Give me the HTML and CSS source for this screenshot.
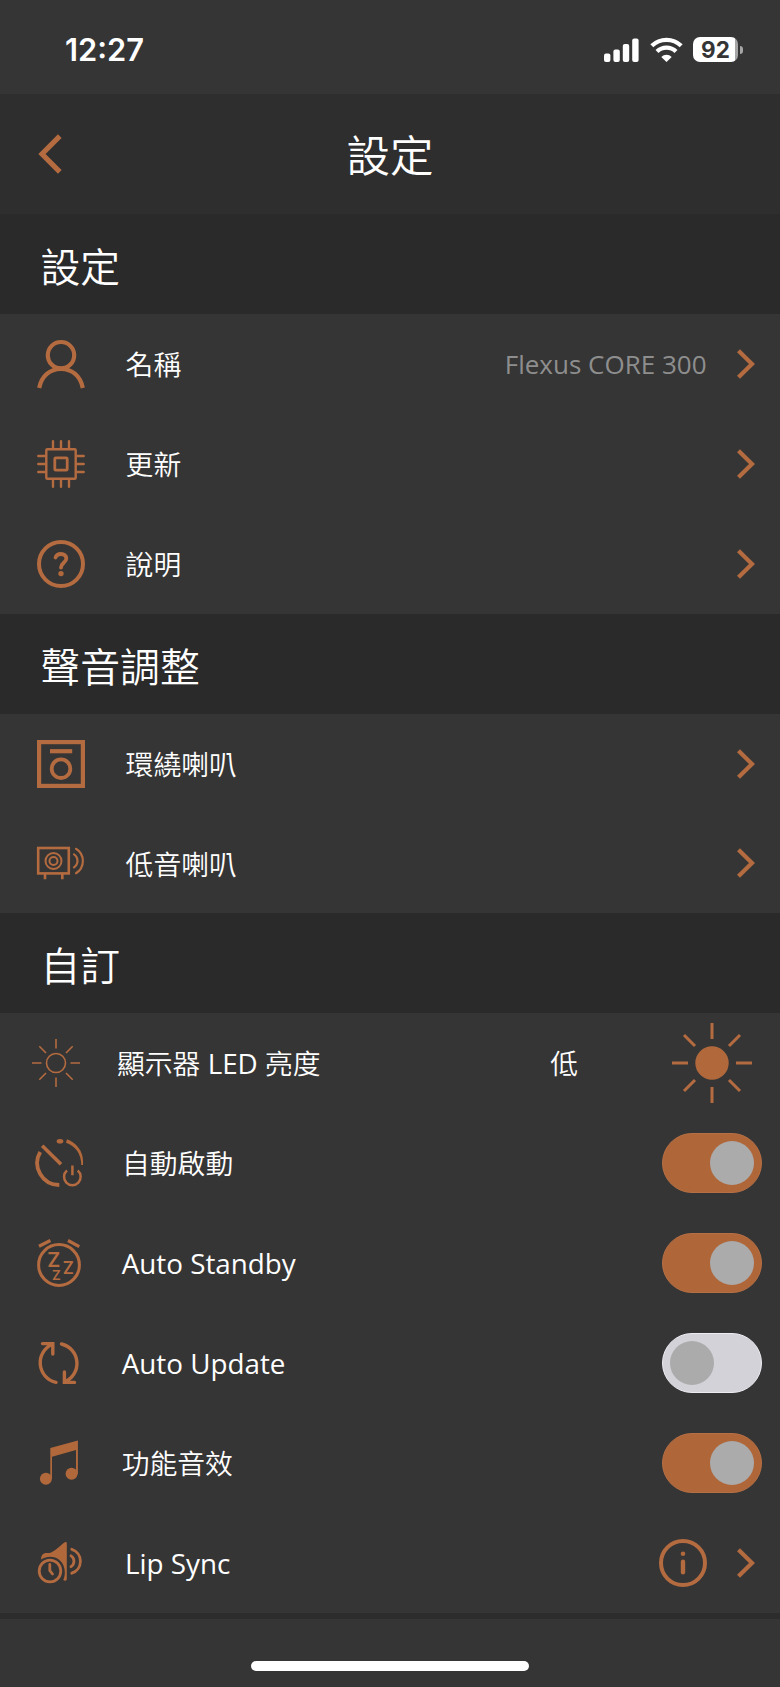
FILE: index.html
```html
<!DOCTYPE html>
<html lang="zh-Hant">
<head>
    <meta charset="UTF-8">
    <title>設定</title>
    <link rel="stylesheet" href="styles.css">
</head>
<body>
    <div class="status-bar">
        <div class="status-time">12:27</div>
        <div class="status-icons">
            <svg class="signal" viewBox="0 0 35 24">
                <rect x="0" y="15.5" width="6.4" height="8.5" rx="2"/>
                <rect x="9.4" y="11.5" width="6.4" height="12.5" rx="2"/>
                <rect x="18.8" y="6" width="6.4" height="18" rx="2"/>
                <rect x="28.2" y="0.5" width="6.4" height="23.5" rx="2"/>
            </svg>
            <svg class="wifi" viewBox="0 0 33 24">
                <path class="wave" d="M1.8 7.8A21 21 0 0 1 31.2 7.8"/>
                <path class="wave" d="M7 13.6A13.5 13.5 0 0 1 26 13.6"/>
                <path d="M16.5 24L11.3 18.9A7.4 7.4 0 0 1 21.7 18.9Z"/>
            </svg>
            <div class="battery">
                <div class="battery-level">92</div>
                <div class="battery-cap"></div>
            </div>
        </div>
    </div>

    <div class="header">
        <svg class="back" viewBox="0 0 24 40"><path d="M21.8 2.2L4 20L21.8 37.8"/></svg>
        <div class="header-title">設定</div>
    </div>

    <div class="section-title">設定</div>
    <div class="list">
        <div class="row">
            <svg class="icon" viewBox="0 0 48 48">
                <g stroke-width="4.2">
                    <circle cx="24" cy="15.2" r="13.2"/>
                    <path d="M2.2 48C4.5 36 13 28.9 24 28.9S43.5 36 45.8 48"/>
                </g>
            </svg>
            <div class="label">名稱</div>
            <div class="value">Flexus CORE 300</div>
            <svg class="arrow" viewBox="0 0 18 30"><path d="M1.5 1.8L15 15L1.5 28.2"/></svg>
        </div>
        <div class="row">
            <svg class="icon" viewBox="0 0 48 48">
                <g stroke-width="2.4" stroke-linecap="round">
                    <rect x="9.3" y="9.3" width="29.4" height="29.4" rx="1"/>
                    <rect x="17.8" y="17.8" width="12.4" height="12.4" rx="1" stroke-width="2.8"/>
                    <path d="M16 1.3V9M24 1.3V9M32 1.3V9M16 39V46.7M24 39V46.7M32 39V46.7"/>
                    <path d="M1.3 16H9M1.3 24H9M1.3 32H9M39 16H46.7M39 24H46.7M39 32H46.7"/>
                </g>
            </svg>
            <div class="label">更新</div>
            <svg class="arrow" viewBox="0 0 18 30"><path d="M1.5 1.8L15 15L1.5 28.2"/></svg>
        </div>
        <div class="row">
            <svg class="icon" viewBox="0 0 48 48">
                <circle cx="24" cy="24" r="22" stroke-width="4"/>
                <path d="M18.5 17.5C19.3 15 21.3 14 24 14C27.2 14 29.3 15.8 29.3 18.6C29.3 22.8 24 22.8 24 27.5" stroke-width="3.8" stroke-linecap="round"/>
                <circle class="fill" cx="24" cy="33.6" r="2.7"/>
            </svg>
            <div class="label">說明</div>
            <svg class="arrow" viewBox="0 0 18 30"><path d="M1.5 1.8L15 15L1.5 28.2"/></svg>
        </div>
    </div>

    <div class="section-title">聲音調整</div>
    <div class="list">
        <div class="row">
            <svg class="icon" viewBox="0 0 48 48">
                <rect x="2.1" y="2.1" width="43.8" height="43.8" stroke-width="4.2"/>
                <path d="M13 11.2H35.2" stroke-width="4.2"/>
                <circle cx="24" cy="28.7" r="9.3" stroke-width="3.8"/>
            </svg>
            <div class="label">環繞喇叭</div>
            <svg class="arrow" viewBox="0 0 18 30"><path d="M1.5 1.8L15 15L1.5 28.2"/></svg>
        </div>
        <div class="row">
            <svg class="icon" viewBox="0 0 48 48">
                <rect x="1.2" y="9" width="30.6" height="25.4" stroke-width="2.6"/>
                <circle cx="16.5" cy="22" r="8" stroke-width="2"/>
                <circle cx="16.5" cy="22" r="4" stroke-width="2"/>
                <path d="M8 35V40.2M25.3 35V40.2" stroke-width="2.6"/>
                <path d="M37 15.3A7.8 7.8 0 0 1 37 28.3M39 9.8A14.3 14.3 0 0 1 39 34.2" stroke-width="2.2" stroke-linecap="round"/>
            </svg>
            <div class="label">低音喇叭</div>
            <svg class="arrow" viewBox="0 0 18 30"><path d="M1.5 1.8L15 15L1.5 28.2"/></svg>
        </div>
    </div>

    <div class="section-title">自訂</div>
    <div class="list list-custom">
        <div class="row row-led">
            <svg class="icon" viewBox="0 0 48 48">
                <g stroke-width="1.6">
                    <circle cx="24" cy="24" r="9.5"/>
                    <path d="M24 0V9.5M24 38.5V48M0 24H9.5M38.5 24H48M7.3 7.3L14 14M34 34L40.7 40.7M40.7 7.3L34 14M14 34L7.3 40.7"/>
                </g>
            </svg>
            <div class="label">顯示器 <span class="latin">LED</span> 亮度</div>
            <div class="level">低</div>
            <svg class="sun" viewBox="0 0 80 80">
                <circle class="fill" cx="40" cy="40" r="16.7"/>
                <path d="M40 0V16M40 64V80M0 40H16M64 40H80M12 12L23 23M57 57L68 68M68 12L57 23M23 57L12 68"/>
            </svg>
        </div>
        <div class="row row-start">
            <svg class="icon" viewBox="0 0 48 48">
                <path d="M5.2 13A22 22 0 0 0 24.3 46" stroke-width="3.8"/>
                <path class="fill" d="M32 .3C41.5 4 47.8 12 48 21.5V26H46.3C46 15 41 7.5 31 3.8Z"/>
                <ellipse class="fill" cx="25" cy="2.2" rx="3.3" ry="2.3"/>
                <path d="M7.2 6.8L26 25.2" stroke-width="3.6"/>
                <path d="M32 31.5A8.3 8.3 0 1 0 42.7 31.5M37.4 26.5V36.3" stroke-width="2.5"/>
            </svg>
            <div class="label">自動啟動</div>
            <div class="toggle on"><div class="knob"></div></div>
        </div>
        <div class="row row-auto">
            <svg class="icon" viewBox="0 0 48 48">
                <circle cx="22" cy="26" r="20.4" stroke-width="3"/>
                <path d="M2 7.3L13.4 1.5M31 1.5L42.3 7.6" stroke-width="3.2"/>
                <text x="10.3" y="28.2" font-size="20">Z</text>
                <text x="25.7" y="34.6" font-size="17">Z</text>
                <text x="15" y="41.3" font-size="13.5">Z</text>
            </svg>
            <div class="label latin">Auto Standby</div>
            <div class="toggle on"><div class="knob"></div></div>
        </div>
        <div class="row row-auto">
            <svg class="icon" viewBox="0 0 48 48">
                <g stroke-width="3.4" stroke-linecap="round">
                    <path d="M19 43.3A20 20 0 0 1 15.5 5.3M5.5 4.6H15.8V15"/>
                    <path d="M24.5 5A20 20 0 0 1 27.5 43M37.5 43.4H27.4V33"/>
                </g>
            </svg>
            <div class="label latin">Auto Update</div>
            <div class="toggle"><div class="knob"></div></div>
        </div>
        <div class="row row-auto">
            <svg class="icon" viewBox="0 0 48 48">
                <path class="fill" d="M13.3 9L40.9 1.5V35H39V11L15 17.8V40H13.3Z"/>
                <circle class="fill" cx="8.9" cy="39.7" r="6"/>
                <circle class="fill" cx="34.6" cy="34.8" r="6"/>
            </svg>
            <div class="label">功能音效</div>
            <div class="toggle on"><div class="knob"></div></div>
        </div>
        <div class="row row-sync">
            <svg class="icon" viewBox="0 0 48 48">
                <path class="fill" d="M4 20.5C4 16 6.5 14 9.5 14H12C16 14 23 6.5 27.5 3.5C29 2.6 29.8 3.2 29.8 4.5V40C29.8 42 27.5 42.3 26.3 41C27.5 38 28.3 35 27.5 30C25.5 19 14 14.5 4 20.5Z"/>
                <circle cx="13" cy="32" r="10.8" stroke-width="2.8"/>
                <path d="M12.8 25.5V31.5L15.5 35" stroke-width="2.8" stroke-linecap="round"/>
                <path d="M34 16.8A6.5 6.5 0 0 1 34 27.7M34.8 10.3A12.6 12.6 0 0 1 34.8 34.2" stroke-width="2.8" stroke-linecap="round"/>
            </svg>
            <div class="label latin">Lip Sync</div>
            <svg class="info" viewBox="0 0 48 48">
                <circle cx="24" cy="24" r="22" stroke-width="4"/>
                <circle class="fill" cx="24" cy="14.7" r="2.3"/>
                <path d="M24 22.8V33.2" stroke-width="4.4" stroke-linecap="round"/>
            </svg>
            <svg class="arrow" viewBox="0 0 18 30"><path d="M1.5 1.8L15 15L1.5 28.2"/></svg>
        </div>
    </div>

    <div class="footer">
        <div class="home-bar"></div>
    </div>
</body>
</html>
```
FILE: styles.css
```css
*{
    margin: 0;
    padding: 0;
    box-sizing: border-box;
}
body{
    width: 780px;
    height: 1687px;
    overflow: hidden;
    display: flex;
    flex-direction: column;
    background-color: #353535;
    color: #ffffff;
    font-family: "Open Sans", "Noto Sans CJK TC", sans-serif;
    font-weight: 350;
}
svg{
    display: block;
    flex-shrink: 0;
    overflow: visible;
    fill: none;
    stroke: #b46b40;
}
svg .fill{
    fill: #b1693c;
    stroke: none;
}

/* status bar */
.status-bar{
    height: 94px;
    flex-shrink: 0;
    display: flex;
    justify-content: space-between;
    padding: 36px 37px 0 65px;
}
.status-time{
    font-family: Inter, sans-serif;
    font-size: 30.8px;
    font-weight: 600;
    line-height: 28px;
}
.status-icons{
    display: flex;
    align-items: center;
    height: 27px;
}
.status-icons svg{
    fill: #ffffff;
    stroke: none;
}
.signal{
    width: 35px;
    height: 24px;
    margin-right: 11px;
}
.wifi{
    width: 33px;
    height: 24px;
    margin-right: 10px;
}
.status-icons .wave{
    fill: none;
    stroke: #ffffff;
    stroke-width: 4.2;
}
.battery{
    display: flex;
    align-items: center;
}
.battery-level{
    width: 45px;
    height: 25px;
    border-radius: 7px;
    background: linear-gradient(to right, #ffffff 42px, #a5a5a5 42px);
    color: #353535;
    font-family: Inter, sans-serif;
    font-size: 22.5px;
    font-weight: 700;
    line-height: 25px;
    text-align: center;
}
.battery-cap{
    width: 3px;
    height: 8px;
    margin-left: 2px;
    border-radius: 0 4px 4px 0;
    background-color: #a5a5a5;
}

/* header */
.header{
    height: 119.9px;
    flex-shrink: 0;
    display: flex;
    align-items: center;
    padding: 0 38px;
    background-color: #2e2e2e;
}
.back{
    width: 24px;
    height: 40px;
    stroke-width: 5.2;
}
.header-title{
    flex: 1;
    padding: 5px 24px 0 0;
    text-align: center;
    font-size: 43.5px;
    line-height: 60px;
}

/* list */
.section-title{
    height: 99.94px;
    flex-shrink: 0;
    padding-left: 40.5px;
    background-color: #2a2a2a;
    font-size: 39.8px;
    line-height: 105px;
}
.row{
    height: 99.94px;
    display: flex;
    align-items: center;
    padding: 0 25.5px 0 36.6px;
}
.icon{
    width: 48px;
    height: 48px;
    margin-right: 41px;
}
.icon text{
    fill: #b46b40;
    stroke: none;
    font-family: Inter, sans-serif;
    font-weight: 600;
}
.label{
    flex: 1;
    padding-top: 1px;
    font-size: 27.8px;
    line-height: 40px;
}
.latin{
    font-weight: 400;
}
.value{
    margin-right: 30px;
    padding-top: 1px;
    color: #8e8e8e;
    font-size: 26px;
    font-weight: 400;
    line-height: 40px;
}
.arrow{
    width: 18px;
    height: 30px;
    stroke-width: 4.2;
}

/* custom section */
.list-custom .label{
    padding-top: 0;
}
.row-led{
    padding-left: 32px;
    padding-right: 28px;
}
.row-led .icon{
    margin-right: 37px;
}
.level{
    margin-right: 94px;
    font-size: 27.8px;
    line-height: 40px;
}
.sun{
    width: 80px;
    height: 80px;
    stroke-width: 3;
}
.row-start{
    padding-left: 35px;
    padding-right: 18px;
}
.row-start .icon{
    margin-right: 39px;
}
.row-auto{
    padding-left: 37px;
    padding-right: 18px;
}
.row-auto .icon{
    margin-right: 36.7px;
}
.row-sync{
    padding-left: 37px;
}
.row-sync .icon{
    margin-right: 40px;
}
.info{
    width: 48px;
    height: 48px;
    margin-right: 29.2px;
}
.toggle{
    width: 100px;
    height: 60px;
    padding: 7px;
    display: flex;
    border: 1px solid #ececf2;
    border-radius: 30px;
    background-color: #d3d2d8;
}
.toggle.on{
    justify-content: flex-end;
    border-color: #b66f44;
    background-color: #af673a;
}
.knob{
    width: 44px;
    height: 44px;
    border-radius: 50%;
    background-color: #ababab;
}

/* bottom */
.footer{
    flex: 1;
    display: flex;
    justify-content: center;
    align-items: flex-end;
    padding-bottom: 16px;
    border-top: 6px solid #2c2c2c;
}
.home-bar{
    width: 278px;
    height: 10px;
    border-radius: 5px;
    background-color: #ffffff;
}
```
